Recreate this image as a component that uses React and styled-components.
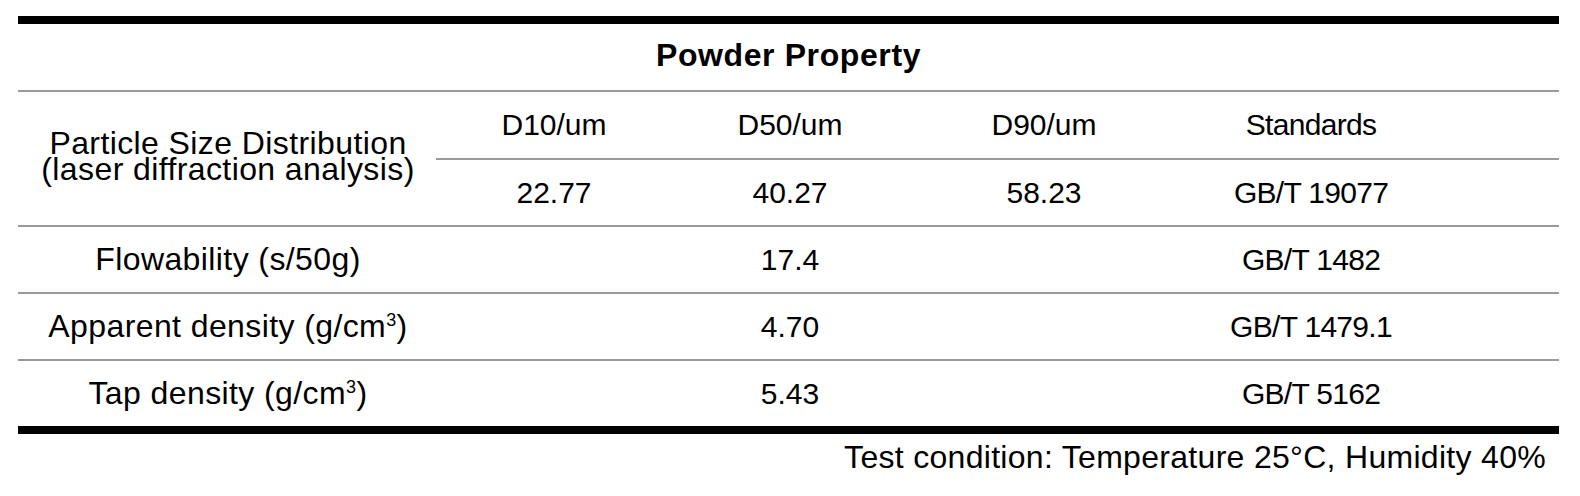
import React from 'react';
import styled, { createGlobalStyle } from 'styled-components';

const GlobalStyle = createGlobalStyle`
  body {
    margin: 0;
    background: #ffffff;
    font-family: "Liberation Sans", Arial, sans-serif;
    color: #000000;
  }
`;

const Page = styled.div`
  padding: 16px 21px 0 18px;
  width: 1541px;
`;

const Table = styled.table`
  width: 1541px;
  border-collapse: separate;
  border-spacing: 0;
  table-layout: fixed;
  border-top: 8px solid #000;
  border-bottom: 8px solid #000;
`;

const Title = styled.th`
  box-sizing: border-box;
  height: 68px;
  font-size: 32px;
  letter-spacing: 0.6px;
  font-weight: 700;
  text-align: center;
  vertical-align: middle;
  padding: 0 0 3px;
  border-bottom: 2px solid #9a9a9a;
`;

const Cell = styled.td`
  box-sizing: border-box;
  height: ${(p) => p.$h || 67}px;
  font-size: ${(p) => (p.$label ? 32 : 30)}px;
  letter-spacing: ${(p) => (p.$label ? '0.4px' : p.$std ? '-0.7px' : '0')};
  text-align: center;
  vertical-align: middle;
  padding: 0 ${(p) => (p.$std ? 117 : 0)}px 0 ${(p) => (p.$label ? 2 : 4)}px;
  border-bottom: ${(p) => (p.$line ? '2px solid #9a9a9a' : 'none')};
  white-space: nowrap;
`;

const Label = styled.div`
  line-height: 26px;
  padding-bottom: 6px;
`;

const Sup = styled.sup`
  font-size: 18px;
  vertical-align: 11px;
  line-height: 0;
`;

const Footer = styled.div`
  text-align: right;
  font-size: 32px;
  letter-spacing: 0.3px;
  line-height: 36px;
  padding: 5px 13px 0 0;
`;

const rows = [
  { label: 'Flowability (s/50g)', value: '17.4', std: 'GB/T 1482' },
  { label: 'Apparent density (g/cm', sup: '3', value: '4.70', std: 'GB/T 1479.1' },
  { label: 'Tap density (g/cm', sup: '3', value: '5.43', std: 'GB/T 5162' },
];

export default function App() {
  return (
    <>
      <GlobalStyle />
      <Page>
        <Table>
          <colgroup>
            <col style={{ width: 418 }} />
            <col style={{ width: 232 }} />
            <col style={{ width: 240 }} />
            <col style={{ width: 268 }} />
            <col style={{ width: 383 }} />
          </colgroup>
          <tbody>
            <tr>
              <Title colSpan={5}>Powder Property</Title>
            </tr>
            <tr>
              <Cell rowSpan={2} $label $line $h={135}>
                <Label>
                  Particle Size Distribution
                  <br />
                  (laser diffraction analysis)
                </Label>
              </Cell>
              <Cell $line $h={68}>D10/um</Cell>
              <Cell $line $h={68}>D50/um</Cell>
              <Cell $line $h={68}>D90/um</Cell>
              <Cell $line $std $h={68}>Standards</Cell>
            </tr>
            <tr>
              <Cell $line>22.77</Cell>
              <Cell $line>40.27</Cell>
              <Cell $line>58.23</Cell>
              <Cell $line $std>GB/T 19077</Cell>
            </tr>
            {rows.map((r, i) => {
              const line = i < rows.length - 1;
              const h = line ? 67 : 65;
              return (
                <tr key={r.std}>
                  <Cell $label $line={line} $h={h}>
                    {r.label}
                    {r.sup && <Sup>{r.sup}</Sup>}
                    {r.sup && ')'}
                  </Cell>
                  <Cell $line={line} $h={h} />
                  <Cell $line={line} $h={h}>{r.value}</Cell>
                  <Cell $line={line} $h={h} />
                  <Cell $line={line} $std $h={h}>{r.std}</Cell>
                </tr>
              );
            })}
          </tbody>
        </Table>
        <Footer>Test condition: Temperature 25°C, Humidity 40%</Footer>
      </Page>
    </>
  );
}
